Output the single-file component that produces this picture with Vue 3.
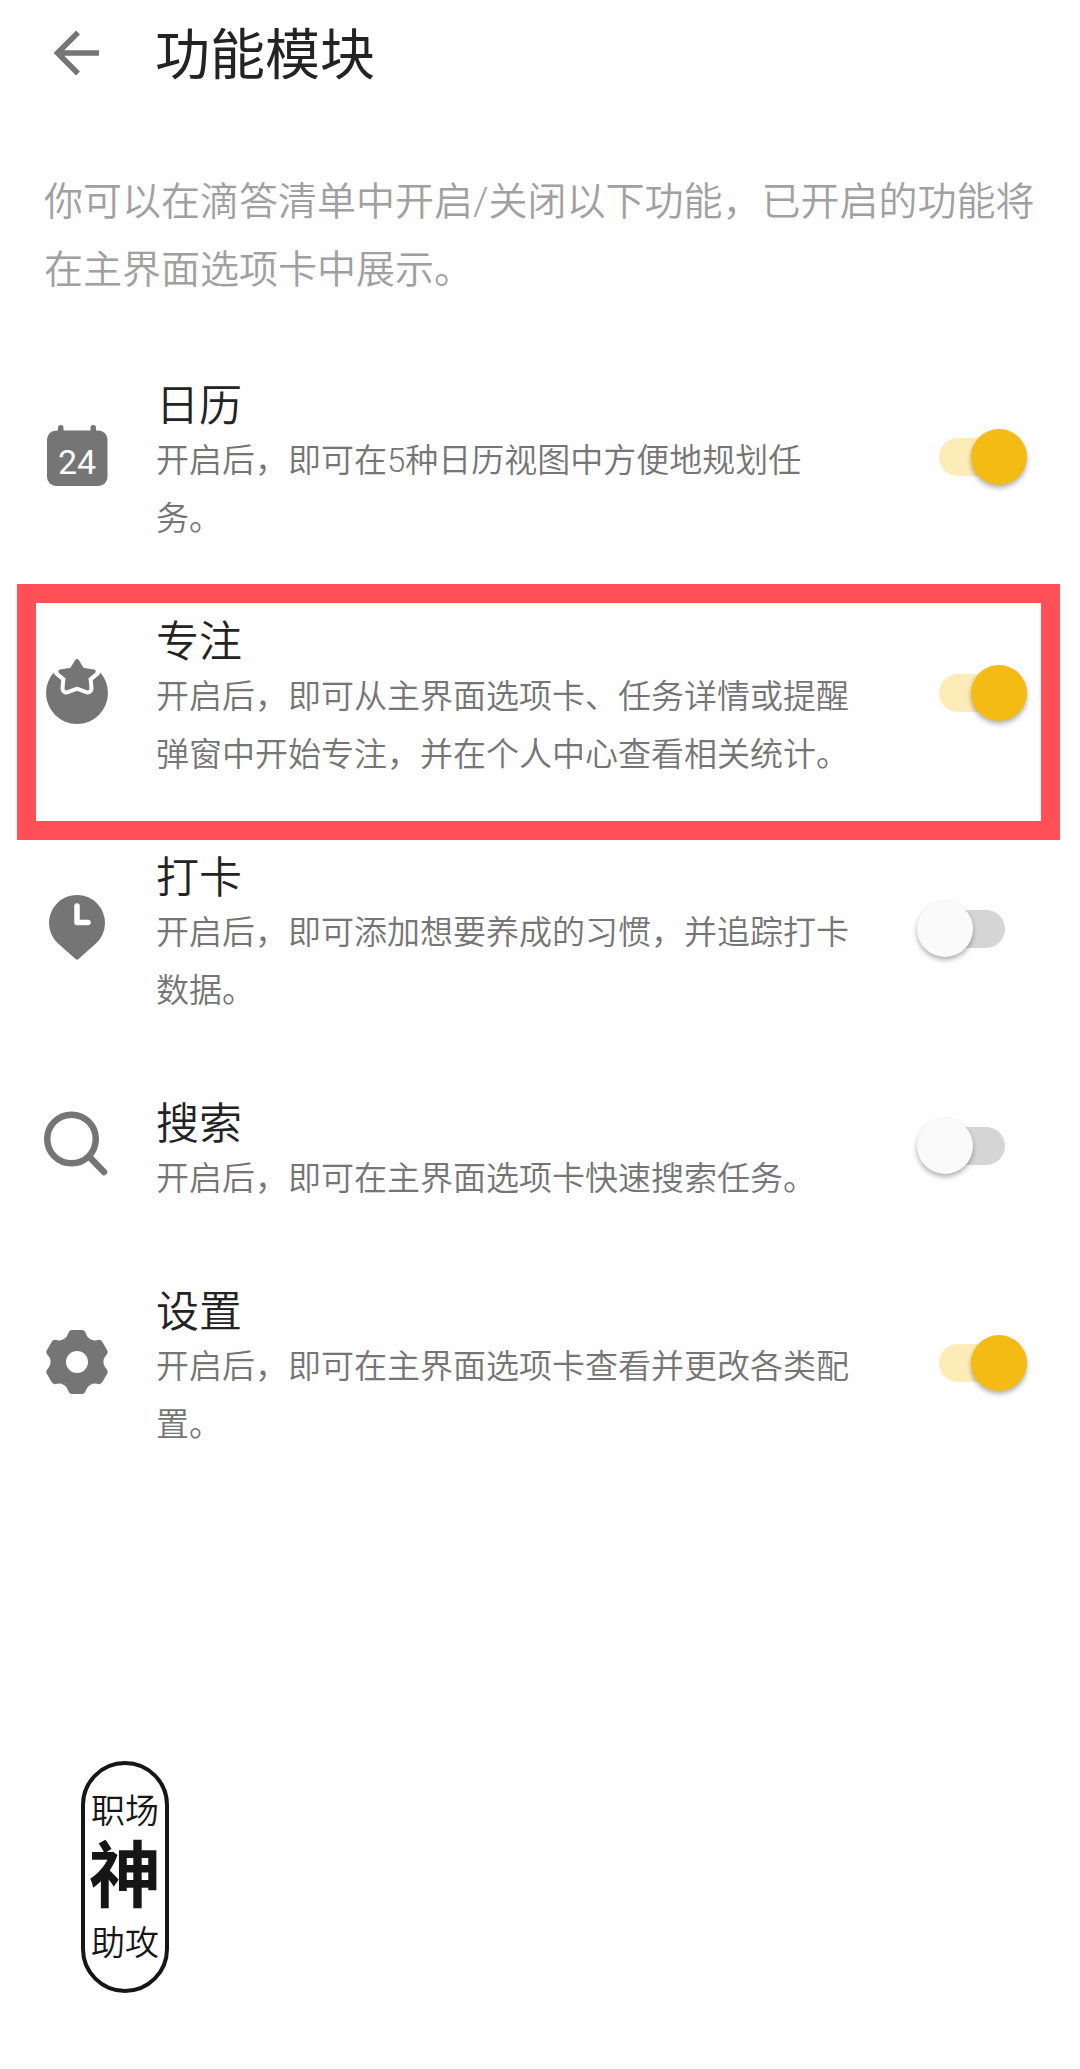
<template>
  <div class="page">
    <header class="toolbar">
      <button type="button" class="back-button" aria-label="返回">
        <svg class="back-icon" viewBox="0 0 48 48" fill="none" xmlns="http://www.w3.org/2000/svg">
          <path d="M46 24H5M25 3.5L4.5 24L25 44.5" stroke="currentColor" stroke-width="5.5" />
        </svg>
      </button>
      <h1 class="toolbar-title">功能模块</h1>
    </header>

    <p class="intro">你可以在滴答清单中开启/关闭以下功能，已开启的功能将在主界面选项卡中展示。</p>

    <main class="module-list">
      <section
        v-for="item in modules"
        :key="item.key"
        class="module-row"
        :class="{ 'highlighted': item.key === 'focus' }"
      >
        <svg class="module-icon" viewBox="0 0 72 72" xmlns="http://www.w3.org/2000/svg" aria-hidden="true">
          <g v-if="item.key === 'calendar'">
            <rect x="17" y="4" width="5.5" height="14" rx="2.7" fill="currentColor" />
            <rect x="49.5" y="4" width="5.5" height="14" rx="2.7" fill="currentColor" />
            <rect x="6" y="9.5" width="60.5" height="55.5" rx="9" fill="currentColor" />
            <text x="36" y="53" class="calendar-day">24</text>
          </g>
          <g v-else-if="item.key === 'focus'">
            <circle cx="36" cy="36" r="31" fill="currentColor" />
            <path d="M13 0V17L24 26H48L59 17V0Z" fill="#fefefe" />
            <path :d="starPath" fill="#fefefe" stroke="#fefefe" stroke-width="12" stroke-linejoin="round" />
            <path :d="starPath" fill="currentColor" stroke="currentColor" stroke-width="4" stroke-linejoin="round" />
          </g>
          <g v-else-if="item.key === 'habit'">
            <path d="M34.5 66L16.5 50A28 28 0 1 1 55.5 50L37.5 66Q36 67.5 34.5 66Z" fill="currentColor" />
            <path d="M36 13V29.5H47" fill="none" stroke="#fefefe" stroke-width="5.5" stroke-linecap="round" stroke-linejoin="round" />
          </g>
          <g v-else-if="item.key === 'search'" fill="none" stroke="currentColor" stroke-width="6.5" stroke-linecap="round">
            <circle cx="30.5" cy="29" r="24.3" />
            <path d="M48.5 47L63 62" />
          </g>
          <g v-else transform="translate(36 35)">
            <circle r="24.5" fill="currentColor" />
            <path
              v-for="n in 6"
              :key="n"
              :transform="`rotate(${n * 60})`"
              d="M0 0L-13.2 -22.9Q-10 -24.7 -9 -28Q-8 -32 -5 -32H5Q8 -32 9 -28Q10 -24.7 13.2 -22.9Z"
              fill="currentColor"
            />
            <circle r="11" fill="#fefefe" />
          </g>
        </svg>

        <div class="module-text">
          <label :for="`switch-${item.key}`" class="module-title">{{ item.title }}</label>
          <p :id="`desc-${item.key}`" class="module-desc">{{ item.desc }}</p>
        </div>

        <div class="module-action">
          <input
            :id="`switch-${item.key}`"
            v-model="item.enabled"
            type="checkbox"
            role="switch"
            class="switch"
            :aria-describedby="`desc-${item.key}`"
          >
        </div>
      </section>
    </main>

    <footer class="stamp">
      <span class="stamp-small">职场</span>
      <span class="stamp-big">神</span>
      <span class="stamp-small">助攻</span>
    </footer>
  </div>
</template>

<script setup>
import { ref } from 'vue'

const modules = ref([
  {
    key: 'calendar',
    title: '日历',
    desc: '开启后，即可在5种日历视图中方便地规划任务。',
    enabled: true
  },
  {
    key: 'focus',
    title: '专注',
    desc: '开启后，即可从主界面选项卡、任务详情或提醒弹窗中开始专注，并在个人中心查看相关统计。',
    enabled: true
  },
  {
    key: 'habit',
    title: '打卡',
    desc: '开启后，即可添加想要养成的习惯，并追踪打卡数据。',
    enabled: false
  },
  {
    key: 'search',
    title: '搜索',
    desc: '开启后，即可在主界面选项卡快速搜索任务。',
    enabled: false
  },
  {
    key: 'settings',
    title: '设置',
    desc: '开启后，即可在主界面选项卡查看并更改各类配置。',
    enabled: true
  }
])

const starPath = 'M36 4L41.5 12.8L52.7 14.5L45.5 20.5L46.5 31.5L36 27.5L25.5 31.5L26.5 20.5L19.3 14.5L30.5 12.8Z'
</script>

<style>
body {
  background: #fefefe;
}
</style>

<style scoped>
.page {
  display: flex;
  flex-direction: column;
  padding-bottom: 76px;
  font-family: Roboto, "Noto Sans CJK SC", sans-serif;
  font-weight: 350;
  color: #232323;
}

.toolbar {
  display: flex;
  align-items: center;
  height: 106px;
}

.back-button {
  display: flex;
  align-items: center;
  width: 155px;
  height: 100%;
  padding: 0 0 0 53px;
  border: none;
  background: none;
  color: #757575;
  cursor: pointer;
}

.back-icon {
  width: 48px;
  height: 48px;
}

.toolbar-title {
  margin: 0;
  padding-top: 4px;
  font-size: 55px;
  font-weight: 400;
  line-height: 80px;
}

.intro {
  margin: 62px 44px 35px;
  font-size: 39px;
  line-height: 68px;
  color: #a0a0a0;
}

.module-row {
  position: relative;
  display: grid;
  grid-template-columns: 156px 1fr 216px;
  align-items: center;
  box-sizing: border-box;
  min-height: 198px;
  padding: 27px 0;
}

/* red frame drawn over the list around the focus row */
.highlighted::after {
  content: "";
  position: absolute;
  top: 9px;
  right: 20px;
  bottom: -29px;
  left: 17px;
  border: 19px solid #ff5058;
  pointer-events: none;
}

.module-icon {
  width: 72px;
  height: 72px;
  margin-left: 41px;
  color: #757575;
}

.calendar-day {
  font-family: Roboto, sans-serif;
  font-size: 34px;
  font-weight: 400;
  text-anchor: middle;
  fill: #fefefe;
}

.module-text {
  padding-top: 14px;
}

.module-title {
  display: block;
  font-size: 43px;
  line-height: 52px;
}

.module-desc {
  margin: 0;
  font-size: 33px;
  line-height: 58px;
  color: #757575;
}

.module-action {
  display: flex;
  justify-content: flex-end;
  padding-right: 53px;
}

.module-action:has(.switch:not(:checked)) {
  padding-right: 75px;
}

.switch {
  appearance: none;
  display: grid;
  align-items: center;
  width: 88px;
  height: 56px;
  margin: 0;
  cursor: pointer;
}

.switch::before,
.switch::after {
  content: "";
  grid-area: 1 / 1;
}

.switch::before {
  height: 38px;
  margin-left: 8px;
  border-radius: 19px;
  background: #d5d5d5;
}

.switch::after {
  width: 56px;
  height: 56px;
  border-radius: 50%;
  background: #fafafa;
  box-shadow: 0 3px 5px rgba(0, 0, 0, 0.3);
}

.switch:checked::before {
  margin: 0 8px 0 0;
  background: #fdebb8;
}

.switch:checked::after {
  justify-self: end;
  background: #f4bb14;
}

.stamp {
  display: flex;
  flex-direction: column;
  align-items: center;
  justify-content: center;
  box-sizing: border-box;
  width: 88px;
  height: 232px;
  margin: 280px 0 0 81px;
  border: 4px solid #161616;
  border-radius: 44px;
  color: #161616;
}

.stamp-small {
  font-size: 34px;
  line-height: 60px;
}

.stamp-big {
  font-size: 72px;
  font-weight: 700;
  line-height: 72px;
}
</style>
